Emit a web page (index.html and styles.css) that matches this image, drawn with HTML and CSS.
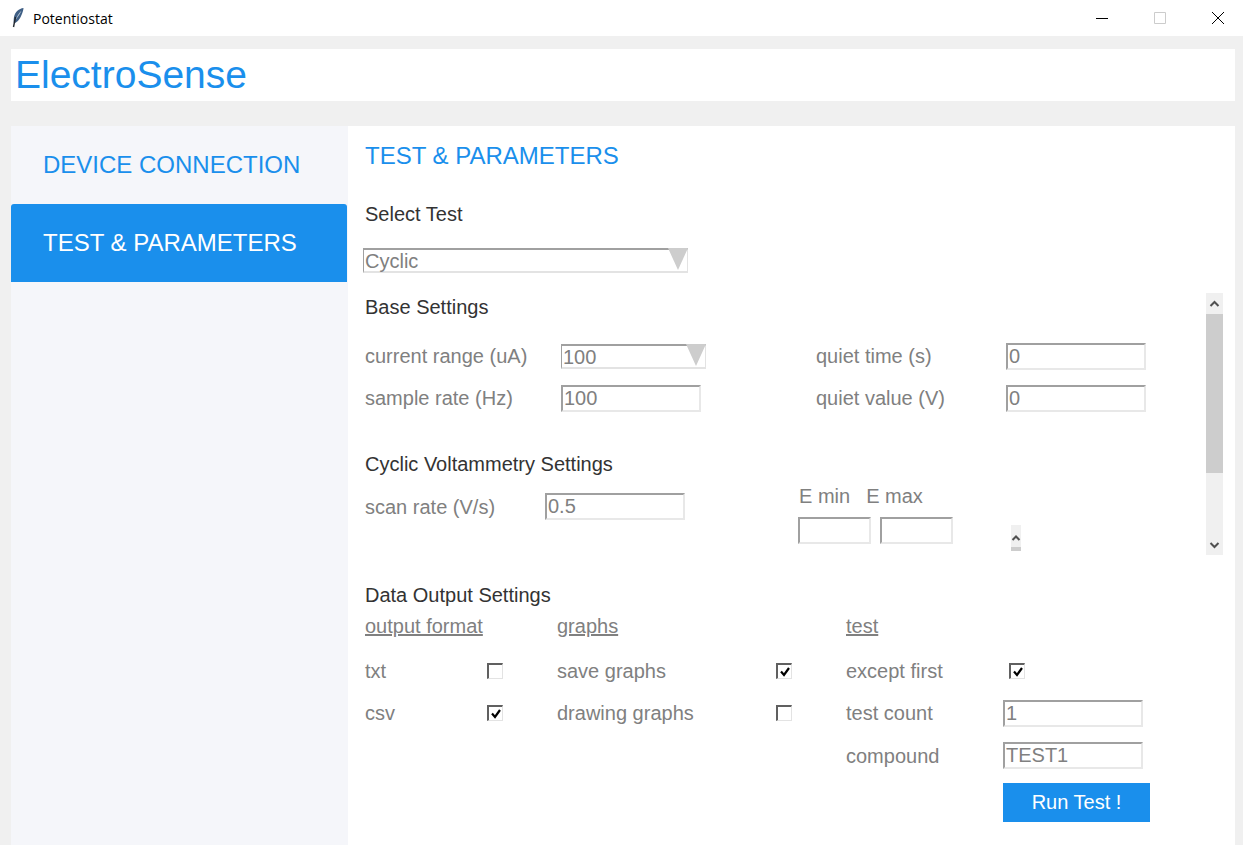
FILE: index.html
```html
<!DOCTYPE html>
<html lang="en">
<head>
    <meta charset="UTF-8">
    <title>Potentiostat</title>
    <link rel="stylesheet" href="styles.css">
</head>
<body>
    <div class="titlebar">
        <svg class="feather" width="14" height="22" viewBox="0 0 14 22">
            <path d="M12.5 1 C8 1.5 4 5 3 10 C2.5 13 2.5 15 3 16.5 C6 15.5 9 12 10.5 8 C11.5 5.5 12.5 3 12.5 1 Z" fill="#3f5f85"/>
            <path d="M10.5 3.5 C8 6 6 9 4.5 13 L6 11 C7.500 9 9.500 6 10.500 3.500 Z" fill="#b9c8d8"/>
            <path d="M4.500 10 L2.500 20" stroke="#22282f" stroke-width="1.4" fill="none"/>
        </svg>
        <span class="window-title">Potentiostat</span>
        <div class="window-buttons">
            <svg width="12" height="12" viewBox="0 0 12 12"><path d="M0 6.500 H12" stroke="#000" fill="none"/></svg>
            <svg width="12" height="12" viewBox="0 0 12 12"><path d="M.5 .5 H11.500 V11.500 H.5 Z" stroke="#cccccc" fill="none"/></svg>
            <svg width="12" height="12" viewBox="0 0 12 12"><path d="M0 0 L12 12 M12 0 L0 12" stroke="#000" fill="none"/></svg>
        </div>
    </div>

    <div class="app">
        <header class="brand">ElectroSense</header>

        <div class="main">
            <nav class="sidebar">
                <div class="tab">DEVICE CONNECTION</div>
                <div class="tab active">TEST &amp; PARAMETERS</div>
            </nav>

            <section class="content">
                <h2 class="page-title">TEST &amp; PARAMETERS</h2>
                <h3 class="select-heading">Select Test</h3>
                <div class="combo combo-wide">Cyclic</div>

                <div class="scroll-panel">
                    <div class="scroll-body">
                        <h3 class="base-heading">Base Settings</h3>
                        <div class="base-grid">
                            <span class="label">current range (uA)</span>
                            <div class="combo combo-small">100</div>
                            <span class="label">quiet time (s)</span>
                            <input class="field" value="0" readonly>
                            <span class="label">sample rate (Hz)</span>
                            <input class="field" value="100" readonly>
                            <span class="label">quiet value (V)</span>
                            <input class="field" value="0" readonly>
                        </div>

                        <h3 class="cyclic-heading">Cyclic Voltammetry Settings</h3>
                        <div class="cyclic-row">
                            <div class="scan-rate">
                                <span class="label">scan rate (V/s)</span>
                                <input class="field" value="0.5" readonly>
                            </div>
                            <div class="limits">
                                <div class="limit-labels">
                                    <span class="label">E min</span>
                                    <span class="label">E max</span>
                                </div>
                                <div class="limit-fields">
                                    <input class="field field-short" readonly>
                                    <input class="field field-short" readonly>
                                </div>
                            </div>
                            <div class="mini-scroll">
                                <svg width="10" height="8" viewBox="0 0 10 8"><path d="M1.500 6 L5 2.500 L8.500 6" stroke="#505050" stroke-width="2" fill="none"/></svg>
                                <span class="mini-thumb"></span>
                            </div>
                        </div>
                    </div>
                    <div class="scrollbar">
                        <svg width="17" height="21" viewBox="0 0 17 21"><path d="M4.500 13 L8.500 9 L12.500 13" stroke="#505050" stroke-width="2" fill="none"/></svg>
                        <div class="thumb"></div>
                        <div class="track"></div>
                        <svg width="17" height="21" viewBox="0 0 17 21"><path d="M4.500 9 L8.500 13 L12.500 9" stroke="#505050" stroke-width="2" fill="none"/></svg>
                    </div>
                </div>

                <h3 class="output-heading">Data Output Settings</h3>
                <div class="output-grid">
                    <span class="label col-head span-two">output format</span>
                    <span class="label col-head span-two">graphs</span>
                    <span class="label col-head span-two">test</span>

                    <span class="label">txt</span>
                    <span class="check"></span>
                    <span class="label">save graphs</span>
                    <span class="check"><svg width="14" height="14" viewBox="0 0 14 14"><path d="M3 6.500 L6 10 L11 3" stroke="#000" stroke-width="2.200" fill="none"/></svg></span>
                    <span class="label">except first</span>
                    <span class="check check-third"><svg width="14" height="14" viewBox="0 0 14 14"><path d="M3 6.500 L6 10 L11 3" stroke="#000" stroke-width="2.200" fill="none"/></svg></span>

                    <span class="label">csv</span>
                    <span class="check"><svg width="14" height="14" viewBox="0 0 14 14"><path d="M3 6.500 L6 10 L11 3" stroke="#000" stroke-width="2.200" fill="none"/></svg></span>
                    <span class="label">drawing graphs</span>
                    <span class="check"></span>
                    <span class="label">test count</span>
                    <input class="field" value="1" readonly>

                    <span class="label third-col">compound</span>
                    <input class="field" value="TEST1" readonly>
                </div>
                <div class="actions">
                    <button class="run-btn">Run Test !</button>
                </div>
            </section>
        </div>
    </div>
</body>
</html>
```

FILE: styles.css
```css
html, body {
    margin: 0;
    height: 100%;
    overflow: hidden;
}
body {
    font-family: "Liberation Sans", Arial, sans-serif;
    background: #f0f0f0;
    color: #808080;
}

/* window chrome */
.titlebar {
    height: 36px;
    background: white;
    display: flex;
    align-items: center;
    padding-left: 11px;
}
.feather {
    margin-right: 8px;
}
.window-title {
    font-family: "Open Sans", sans-serif;
    font-size: 14px;
    color: #000;
}
.window-buttons {
    margin-left: auto;
    display: flex;
    gap: 46px;
    padding-right: 19px;
}

.app {
    padding: 13px 8px 0 11px;
}
.brand {
    height: 52px;
    line-height: 52px;
    background: white;
    color: #1a8fec;
    font-size: 39px;
    padding-left: 4px;
}
.main {
    display: flex;
    margin-top: 25px;
    height: 719px;
}

/* left menu */
.sidebar {
    width: 337px;
    flex-shrink: 0;
    background: #f5f6fa;
}
.tab {
    height: 78px;
    line-height: 78px;
    padding-left: 32px;
    width: 336px;
    box-sizing: border-box;
    font-size: 24px;
    color: #1a8fec;
}
.tab.active {
    background: #1a8fec;
    color: white;
    border-radius: 3px 3px 0 0;
}

.content {
    flex: 1;
    background: white;
    padding-left: 17px;
    min-width: 0;
}
h2, h3 {
    margin: 0;
    font-weight: normal;
}
.page-title {
    font-size: 24px;
    line-height: 28px;
    color: #1a8fec;
    padding-top: 16px;
}
h3 {
    font-size: 20px;
    line-height: 24px;
    color: #333;
}
.select-heading {
    margin-top: 32px;
}
.label {
    font-size: 20px;
    line-height: 24px;
    color: #808080;
}

/* fake combobox */
.combo {
    position: relative;
    box-sizing: border-box;
    border-top: 2px solid #a0a0a0;
    border-left: 1px solid #a0a0a0;
    border-right: 1px solid #e3e3e3;
    border-bottom: 2px solid #e3e3e3;
    font-size: 20px;
    color: #808080;
    padding-left: 1px;
    background: white;
}
.combo::after {
    content: "";
    position: absolute;
    right: -1px;
    top: -2px;
    border-left: 10px solid transparent;
    border-right: 10px solid transparent;
    border-top: 22px solid #cdcdcd;
}
.combo-wide {
    width: 325px;
    height: 25px;
    line-height: 23px;
    margin: 22px 0 0 -2px;
}
.combo-small {
    width: 145px;
    height: 25px;
    line-height: 22px;
}
.field {
    box-sizing: border-box;
    width: 140px;
    height: 27px;
    border-top: 2px solid #a0a0a0;
    border-left: 2px solid #a0a0a0;
    border-right: 2px solid #e8e8e8;
    border-bottom: 2px solid #e8e8e8;
    padding: 0 0 0 1px;
    margin: 0;
    outline: none;
    font-family: inherit;
    font-size: 20px;
    color: #808080;
    background: white;
}
.field-short {
    width: 73px;
}

/* scrolled settings panel */
.scroll-panel {
    display: flex;
    height: 262px;
    margin-top: 20px;
    width: 858px;
}
.scroll-body {
    flex: 1;
    overflow: hidden;
}
.scrollbar {
    width: 17px;
    display: flex;
    flex-direction: column;
    background: #f0f0f0;
}
.thumb {
    height: 159px;
    background: #cdcdcd;
}
.track {
    flex: 1;
}
.base-heading {
    margin-top: 2px;
}
.base-grid {
    display: grid;
    grid-template-columns: 196px 255px 190px 140px;
    grid-auto-rows: 42px;
    align-items: center;
    margin-top: 16px;
}
.base-grid .field:last-child {
    align-self: center;
}
.cyclic-heading {
    margin-top: 33px;
}
.cyclic-row {
    display: flex;
    margin-top: 5px;
}
.scan-rate {
    width: 433px;
    display: flex;
    align-items: flex-start;
    padding-top: 12px;
    height: 60px;
    box-sizing: border-box;
}
.scan-rate .label {
    width: 180px;
    padding-top: 2px;
}
.limit-labels {
    display: flex;
    gap: 16px;
    padding-left: 1px;
}
.limits {
    width: 213px;
    padding-top: 3px;
}
.limit-fields {
    display: flex;
    gap: 9px;
    margin-top: 9px;
}
.mini-scroll {
    width: 10px;
    height: 26px;
    margin-top: 44px;
    background: #f0f0f0;
    display: flex;
    flex-direction: column;
    justify-content: space-between;
    padding-top: 9px;
    box-sizing: border-box;
}
.mini-thumb {
    height: 4px;
    background: #cdcdcd;
}

/* output settings */
.output-heading {
    margin-top: 28px;
}
.output-grid {
    display: grid;
    grid-template-columns: 122px 70px 219px 70px 157px 140px;
    grid-auto-rows: 42.5px;
    align-items: center;
}
.span-two {
    grid-column: span 2;
}
.col-head {
    text-decoration: underline;
    align-self: start;
    padding-top: 7px;
}
.third-col {
    grid-column: 5;
}
.check {
    box-sizing: border-box;
    width: 16px;
    height: 16px;
    display: block;
    border-top: 2px solid #606060;
    border-left: 2px solid #606060;
    border-right: 1px solid #e3e3e3;
    border-bottom: 1px solid #e3e3e3;
    background: white;
}
.check svg {
    display: block;
}
.check-third {
    margin-left: 6px;
}
.actions {
    padding: 6px 0 0 638px;
}
.run-btn {
    width: 147px;
    height: 39px;
    border: none;
    background: #1a8fec;
    color: white;
    font-family: inherit;
    font-size: 20px;
    padding: 0;
}
```
